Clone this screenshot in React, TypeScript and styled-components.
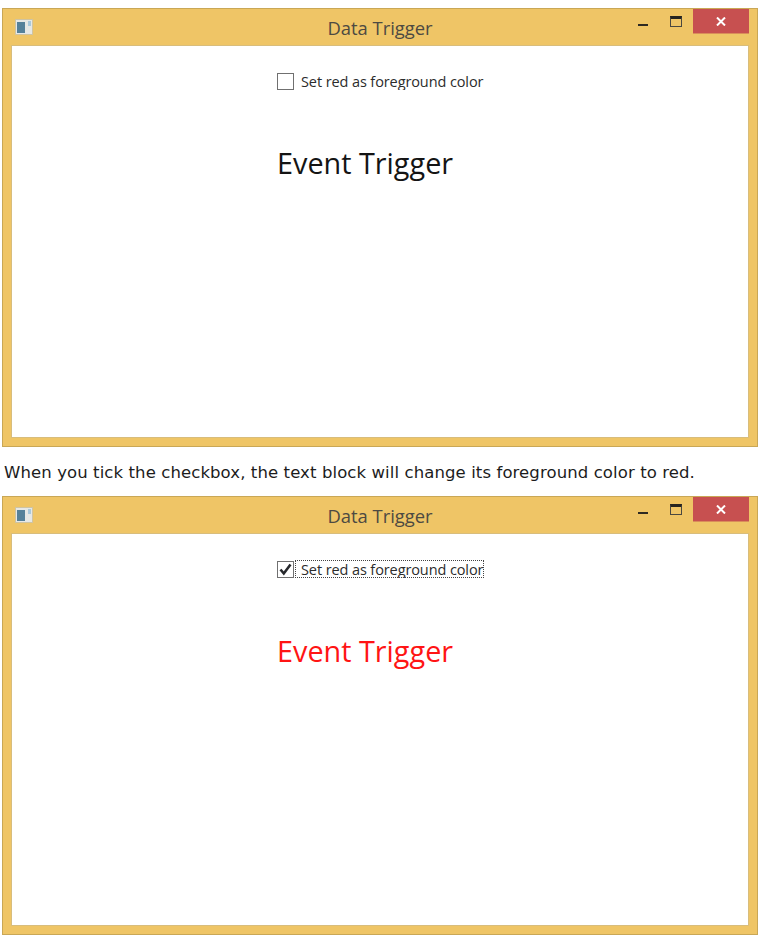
import React from 'react';
import styled, { createGlobalStyle } from 'styled-components';

const GlobalStyle = createGlobalStyle`
  html, body {
    margin: 0;
    padding: 0;
    background: #ffffff;
  }
`;

const App: React.FC = () => (
  <>
    <GlobalStyle />
    <Page>
      <TriggerWindow />
      <Caption>
        When you tick the checkbox, the text block will change its foreground color to red.
      </Caption>
      <TriggerWindow checked />
    </Page>
  </>
);

export default App;

const TriggerWindow: React.FC<{ checked?: boolean }> = ({ checked }) => (
  <Window>
    <TitleBar>
      <AppIcon>
        <AppIconPane />
        <AppIconDot />
      </AppIcon>
      <Title>Data Trigger</Title>
      <Controls>
        <Minimize />
        <Maximize />
        <Close>
          <svg width="10" height="9" viewBox="0 0 10 9">
            <path d="M1 0.5 L9 8.5 M9 0.5 L1 8.5" stroke="#fff" strokeWidth="2" fill="none" />
          </svg>
        </Close>
      </Controls>
    </TitleBar>
    <Client>
      <CheckRow>
        <CheckBox>
          {checked && (
            <svg width="13" height="13" viewBox="0 0 13 13">
              <path d="M1.5 6.5 L4.8 10.5 L11.5 1.5" stroke="#26282c" strokeWidth="2.6" fill="none" />
            </svg>
          )}
        </CheckBox>
        <CheckLabel $focused={checked}>Set red as foreground color</CheckLabel>
      </CheckRow>
      <TriggerText $red={checked}>Event Trigger</TriggerText>
    </Client>
  </Window>
);

// Elements

const Page = styled.div`
  display: flex;
  flex-direction: column;
  width: 760px;
  height: 936px;
  padding: 8px 2px 0;
  box-sizing: border-box;
  overflow: hidden;
  font-family: 'Open Sans', 'Noto Sans', sans-serif;
`;

const Window = styled.div`
  display: flex;
  flex-direction: column;
  width: 756px;
  height: 439px;
  flex: none;
  box-sizing: border-box;
  padding: 0 8px 8px;
  background: #efc566;
  border: 1px solid #c9a756;
`;

const TitleBar = styled.div`
  display: grid;
  grid-template-columns: 1fr auto 1fr;
  align-items: start;
  height: 36px;
  flex: none;
`;

const AppIcon = styled.div`
  position: relative;
  width: 18px;
  height: 16px;
  margin: 10px 0 0 4px;
  box-sizing: border-box;
  background: #e6e8e6;
  border: 1px solid #cfc4a2;
`;

const AppIconPane = styled.div`
  position: absolute;
  left: 1px;
  top: 2px;
  width: 8px;
  height: 11px;
  background: #55819a;
`;

const AppIconDot = styled.div`
  position: absolute;
  right: 1px;
  top: 1px;
  width: 3px;
  height: 5px;
  background: #a9c9dc;
`;

const Title = styled.div`
  margin-top: 8px;
  font-size: 18.4px;
  line-height: 22px;
  color: #4d4a42;
`;

const Controls = styled.div`
  display: flex;
  justify-content: flex-end;
  align-items: flex-start;
`;

const Minimize = styled.div`
  width: 10px;
  height: 2px;
  margin: 15px 22px 0 0;
  background: #2e2a22;
`;

const Maximize = styled.div`
  width: 12px;
  height: 11px;
  margin: 7px 11px 0 0;
  box-sizing: border-box;
  border: 1px solid #4a4840;
  border-top: 3px solid #26241f;
`;

const Close = styled.div`
  display: flex;
  align-items: center;
  justify-content: center;
  width: 56px;
  height: 25px;
  background: #c75050;
  border-bottom: 1px solid #d98d5a;
  box-sizing: border-box;
`;

const Client = styled.div`
  flex: 1;
  display: flex;
  flex-direction: column;
  align-items: flex-start;
  padding: 26px 0 0 265px;
  background: #ffffff;
  border: 1px solid #d8bd7c;
`;

const CheckRow = styled.div`
  display: flex;
  align-items: flex-start;
  height: 18px;
`;

const CheckBox = styled.div`
  display: flex;
  align-items: center;
  justify-content: center;
  width: 17px;
  height: 17px;
  margin-top: 1px;
  box-sizing: border-box;
  background: #ffffff;
  border: 1px solid #707070;
`;

const CheckLabel = styled.div<{ $focused?: boolean }>`
  width: 189px;
  height: 18px;
  box-sizing: border-box;
  margin-left: 1px;
  padding-left: 6px;
  white-space: nowrap;
  overflow: hidden;
  font-size: 14.5px;
  line-height: 19px;
  letter-spacing: -0.1px;
  color: #2c2c2c;
  outline: ${({ $focused }) => ($focused ? '1px dotted #444' : 'none')};
  outline-offset: -1px;
`;

const TriggerText = styled.div<{ $red?: boolean }>`
  margin-top: 54px;
  font-size: 28.8px;
  line-height: 38px;
  white-space: nowrap;
  color: ${({ $red }) => ($red ? '#ff1414' : '#141414')};
`;

const Caption = styled.div`
  flex: none;
  height: 49px;
  margin-left: 2px;
  padding-top: 15px;
  box-sizing: border-box;
  font-family: 'DejaVu Sans', Verdana, sans-serif;
  font-size: 16.5px;
  letter-spacing: 0.1px;
  line-height: 22px;
  color: #1c1c1c;
  white-space: nowrap;
`;
